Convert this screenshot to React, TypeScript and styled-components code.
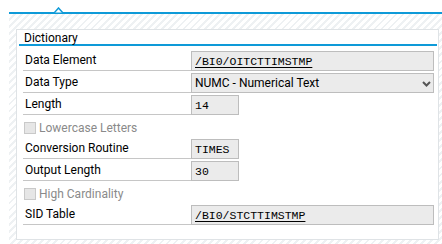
import React from "react";
import styled, { createGlobalStyle } from "styled-components";

const GlobalStyle = createGlobalStyle`
  html, body { margin: 0; padding: 0; background: #ffffff; }
  body { font-family: Roboto, "Liberation Sans", Arial, sans-serif; font-size: 12px; color: #000; }
`;

const Page = styled.div`
  width: 442px;
  height: 244px;
  padding-left: 9px;
  box-sizing: border-box;
  display: flex;
  flex-direction: column;
  overflow: hidden;
`;

const TabStrip = styled.div`
  position: relative;
  height: 14px;
  flex: 0 0 14px;
  box-sizing: border-box;
  border-bottom: 2px solid #0e9ad8;
`;

const Notch = styled.svg`
  position: absolute;
  left: 45px;
  top: 7px;
`;

const Hatch = styled.div`
  flex: 1;
  padding: 15px 3px 4px 7px;
  background: repeating-linear-gradient(
    135deg,
    #ffffff 0px,
    #ffffff 3px,
    #eef1f3 3px,
    #eef1f3 5px
  );
`;

const Panel = styled.section`
  background: #ffffff;
  border: 1px solid #dfe3e6;
  padding-bottom: 14px;
`;

const Header = styled.div`
  box-sizing: border-box;
  margin: 0 1px 0 2px;
  height: 16px;
  padding: 2px 0 0 5px;
  line-height: 12px;
  border-bottom: 2px solid #0e9ad8;
`;

const Rows = styled.div`
  margin-top: 3px;
  padding: 0 4px 0 6px;
  display: flex;
  flex-direction: column;
`;

const Row = styled.div`
  display: grid;
  grid-template-columns: 168px 1fr;
  height: 22px;
`;

const Label = styled.div`
  padding: 2px 0 0 2px;
  line-height: 19px;
  border-bottom: 1px solid #c6c6c6;
  white-space: nowrap;
`;

const Field = styled.div<{ $w?: number; $mono?: boolean }>`
  align-self: end;
  box-sizing: border-box;
  height: 20px;
  width: ${(p) => (p.$w ? `${p.$w}px` : "100%")};
  border: 1px solid #bdbdbd;
  background: #ebebeb;
  padding: 1px 0 0 3px;
  line-height: 17px;
  font-family: ${(p) => (p.$mono ? `"Liberation Mono", "Courier New", monospace` : `Roboto, "Liberation Sans", Arial, sans-serif`)};
  font-size: ${(p) => (p.$mono ? "11.5px" : "12px")};
  display: flex;
  align-items: center;
  justify-content: space-between;
  white-space: nowrap;
`;

const Link = styled.span`
  text-decoration: underline;
  text-underline-offset: 2px;
`;

const Chevron = styled.svg`
  margin-right: 2px;
`;

const CheckRow = styled.div`
  box-sizing: border-box;
  height: 22px;
  padding: 4px 0 0 1px;
  display: flex;
  align-items: center;
  gap: 3px;
`;

const Box = styled.span`
  width: 10px;
  height: 10px;
  border: 1px solid #c9c9c9;
  background: #e6e6e6;
`;

const Disabled = styled.span`
  color: #8a8a8a;
`;

const TextRow = ({ label, children }: { label: string; children: React.ReactNode }) => (
  <Row>
    <Label>{label}</Label>
    {children}
  </Row>
);

export default function App() {
  return (
    <>
      <GlobalStyle />
      <Page>
        <TabStrip>
          <Notch width="10" height="6" viewBox="0 0 10 6">
            <polygon points="0,5.5 4.5,1 9,5.5" fill="#ffffff" />
            <polyline points="0,6 4.5,1 9,6" fill="none" stroke="#0e9ad8" strokeWidth="1.5" />
          </Notch>
        </TabStrip>
        <Hatch>
          <Panel>
            <Header>Dictionary</Header>
            <Rows>
              <TextRow label="Data Element">
                <Field $mono>
                  <Link>/BI0/OITCTTIMSTMP</Link>
                </Field>
              </TextRow>
              <TextRow label="Data Type">
                <Field>
                  <span>NUMC - Numerical Text</span>
                  <Chevron width="9" height="6" viewBox="0 0 9 6">
                    <polyline points="1,1 4.5,4.5 8,1" fill="none" stroke="#555" strokeWidth="2" />
                  </Chevron>
                </Field>
              </TextRow>
              <TextRow label="Length">
                <Field $mono $w={48}>14</Field>
              </TextRow>
              <CheckRow>
                <Box />
                <Disabled>Lowercase Letters</Disabled>
              </CheckRow>
              <TextRow label="Conversion Routine">
                <Field $mono $w={48}>TIMES</Field>
              </TextRow>
              <TextRow label="Output Length">
                <Field $mono $w={48}>30</Field>
              </TextRow>
              <CheckRow>
                <Box />
                <Disabled>High Cardinality</Disabled>
              </CheckRow>
              <TextRow label="SID Table">
                <Field $mono>
                  <Link>/BI0/STCTTIMSTMP</Link>
                </Field>
              </TextRow>
            </Rows>
          </Panel>
        </Hatch>
      </Page>
    </>
  );
}
